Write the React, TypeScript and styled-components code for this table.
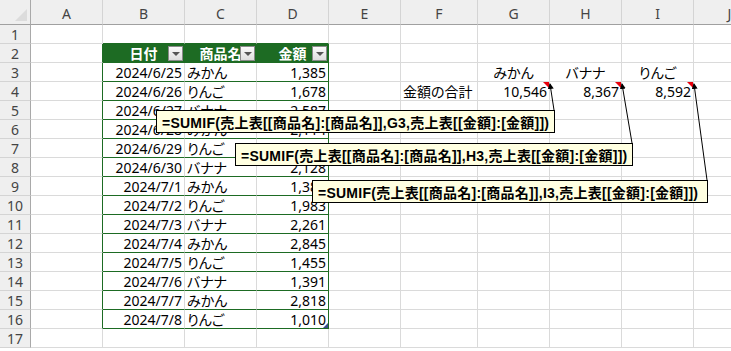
import React from "react";
import styled, { createGlobalStyle, css } from "styled-components";

const GREEN = "#1d6b23";
const GRID = "#dadada";

const GlobalStyle = createGlobalStyle`
  html, body {
    margin: 0;
    padding: 0;
    background: #fff;
    overflow: hidden;
  }
  body {
    font-family: "Noto Sans", "Noto Sans CJK JP", sans-serif;
  }
`;

const COL_WIDTHS = [31, 72, 82, 72, 72, 72, 77, 72, 72, 72, 72];
const LETTERS = ["A", "B", "C", "D", "E", "F", "G", "H", "I", "J"];

const Sheet = styled.div`
  position: relative;
  display: grid;
  grid-template-columns: ${COL_WIDTHS.map((w) => `${w}px`).join(" ")};
  grid-template-rows: 25px;
  grid-auto-rows: 19px;
  width: 731px;
  height: 351px;
  overflow: hidden;
`;

const HeadBase = css`
  box-sizing: border-box;
  background: #efefef;
  color: #444;
  font-size: 14px;
  display: flex;
  align-items: center;
  justify-content: center;
`;

const Corner = styled.div`
  ${HeadBase};
  position: relative;
  border-right: 1px solid #a9a9a9;
  border-bottom: 1px solid #a0a0a0;

  &::after {
    content: "";
    position: absolute;
    right: 3px;
    bottom: 3px;
    border-left: 12px solid transparent;
    border-bottom: 12px solid #dcdcdc;
  }
`;

const ColHead = styled.div`
  ${HeadBase};
  padding-top: 3px;
  border-right: 1px solid #d4d4d4;
  border-bottom: 1px solid #a0a0a0;
`;

const RowHead = styled.div`
  ${HeadBase};
  border-right: 1px solid #a9a9a9;
  border-bottom: 1px solid #d4d4d4;
`;

type Align = "left" | "right" | "center";

const Cell = styled.div<{
  $align?: Align;
  $right?: string;
  $bottom?: string;
  $fill?: string;
  $head?: boolean;
  $note?: boolean;
  $handle?: boolean;
}>`
  position: relative;
  box-sizing: border-box;
  display: flex;
  align-items: center;
  justify-content: ${(p) =>
    p.$align === "right" ? "flex-end" : p.$align === "center" ? "center" : "flex-start"};
  padding: 0 2px;
  white-space: nowrap;
  font-family: "Noto Sans", "Noto Sans CJK JP", sans-serif;
  font-feature-settings: "palt";
  font-size: 14px;
  color: ${(p) => (p.$head ? "#fff" : "#000")};
  font-weight: ${(p) => (p.$head ? 700 : 400)};
  background: ${(p) => p.$fill || "#fff"};
  border-right: 1px solid ${(p) => p.$right || GRID};
  border-bottom: 1px solid ${(p) => p.$bottom || GRID};

  ${(p) =>
    p.$note &&
    css`
      &::after {
        content: "";
        position: absolute;
        top: 0;
        right: 0;
        border-left: 6px solid transparent;
        border-top: 6px solid #e8000b;
      }
    `}

  ${(p) =>
    p.$handle &&
    css`
      &::after {
        content: "";
        position: absolute;
        right: 0;
        bottom: 0;
        border-left: 5px solid transparent;
        border-bottom: 5px solid #3b4d8c;
      }
    `}
`;

const FilterButton = styled.span`
  position: absolute;
  right: 1px;
  top: 2px;
  width: 15px;
  height: 15px;
  box-sizing: border-box;
  border: 1px solid #8a8a8a;
  background: linear-gradient(#fbfbfb, #dedede);
  display: flex;
  align-items: center;
  justify-content: center;

  &::before {
    content: "";
    border-left: 4px solid transparent;
    border-right: 4px solid transparent;
    border-top: 4px solid #555;
  }
`;

const Note = styled.div<{ $left: number; $top: number; $width: number }>`
  position: absolute;
  left: ${(p) => p.$left}px;
  top: ${(p) => p.$top}px;
  width: ${(p) => p.$width}px;
  height: 23px;
  box-sizing: border-box;
  padding: 0 5px;
  display: flex;
  align-items: center;
  background: #ffffe1;
  border: 1px solid #000;
  font-family: "Liberation Sans", "Noto Sans CJK JP", sans-serif;
  font-weight: 700;
  font-size: 14px;
  letter-spacing: 0.25px;
  white-space: nowrap;
  overflow: hidden;
  color: #000;
`;

const Leaders = styled.svg`
  position: absolute;
  left: 0;
  top: 0;
  pointer-events: none;
`;

type Sale = [string, string, string];

const sales: Sale[] = [
  ["2024/6/25", "みかん", "1,385"],
  ["2024/6/26", "りんご", "1,678"],
  ["2024/6/27", "バナナ", "2,587"],
  ["2024/6/28", "みかん", "2,114"],
  ["2024/6/29", "りんご", "2,466"],
  ["2024/6/30", "バナナ", "2,128"],
  ["2024/7/1", "みかん", "1,384"],
  ["2024/7/2", "りんご", "1,983"],
  ["2024/7/3", "バナナ", "2,261"],
  ["2024/7/4", "みかん", "2,845"],
  ["2024/7/5", "りんご", "1,455"],
  ["2024/7/6", "バナナ", "1,391"],
  ["2024/7/7", "みかん", "2,818"],
  ["2024/7/8", "りんご", "1,010"],
];

const notes = [
  { left: 156, top: 110, width: 399, cell: "G3", from: [554, 110], to: [550, 84] },
  { left: 235, top: 143, width: 398, cell: "H3", from: [632, 143], to: [622, 84] },
  { left: 312, top: 180, width: 396, cell: "I3", from: [707, 180], to: [694, 84] },
];

const formula = (ref: string) =>
  `=SUMIF(売上表[[商品名]:[商品名]],${ref},売上表[[金額]:[金額]])`;

type Spec = { text?: string; align?: Align; note?: boolean };

// content of row r (1-based), columns A..J
function rowContent(r: number): Spec[] {
  const row: Spec[] = LETTERS.map(() => ({}));
  if (r === 2) {
    row[1] = { text: "日付", align: "center" };
    row[2] = { text: "商品名", align: "center" };
    row[3] = { text: "金額", align: "center" };
  }
  if (r >= 3 && r <= 16) {
    const [date, item, amount] = sales[r - 3];
    row[1] = { text: date, align: "right" };
    row[2] = { text: item, align: "left" };
    row[3] = { text: amount, align: "right" };
  }
  if (r === 3) {
    row[6] = { text: "みかん", align: "center" };
    row[7] = { text: "バナナ", align: "center" };
    row[8] = { text: "りんご", align: "center" };
  }
  if (r === 4) {
    row[5] = { text: "金額の合計", align: "left" };
    row[6] = { text: "10,546", align: "right", note: true };
    row[7] = { text: "8,367", align: "right", note: true };
    row[8] = { text: "8,592", align: "right", note: true };
  }
  return row;
}

export default function App() {
  const rows = Array.from({ length: 17 }, (_, i) => i + 1);

  return (
    <>
      <GlobalStyle />
      <Sheet>
        <Corner />
        {LETTERS.map((l) => (
          <ColHead key={l}>{l}</ColHead>
        ))}

        {rows.map((r) => (
          <React.Fragment key={r}>
            <RowHead>{r}</RowHead>
            {rowContent(r).map((spec, c) => {
              const inTable = r >= 2 && r <= 16;
              const tableCol = c >= 1 && c <= 3;
              const head = r === 2 && tableCol;
              let right: string | undefined;
              let bottom: string | undefined;
              if (inTable && (c === 0 || c === 3 || head)) right = GREEN;
              if ((r === 1 || inTable) && tableCol) bottom = GREEN;
              return (
                <Cell
                  key={c}
                  $align={spec.align}
                  $right={right}
                  $bottom={bottom}
                  $fill={head ? GREEN : undefined}
                  $head={head}
                  $note={spec.note}
                  $handle={r === 16 && c === 3}
                >
                  {spec.text}
                  {head && <FilterButton />}
                </Cell>
              );
            })}
          </React.Fragment>
        ))}

        <Leaders width={731} height={351}>
          <defs>
            <marker
              id="tip"
              viewBox="0 0 6 6"
              refX="5"
              refY="3"
              markerWidth="6"
              markerHeight="6"
              orient="auto"
            >
              <path d="M0 0 L6 3 L0 6 Z" fill="#000" />
            </marker>
          </defs>
          {notes.map((n) => (
            <line
              key={n.cell}
              x1={n.from[0]}
              y1={n.from[1]}
              x2={n.to[0]}
              y2={n.to[1]}
              stroke="#000"
              strokeWidth={1}
              markerEnd="url(#tip)"
            />
          ))}
        </Leaders>

        {notes.map((n) => (
          <Note key={n.cell} $left={n.left} $top={n.top} $width={n.width}>
            {formula(n.cell)}
          </Note>
        ))}
      </Sheet>
    </>
  );
}
